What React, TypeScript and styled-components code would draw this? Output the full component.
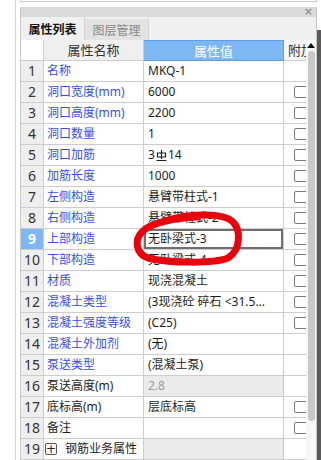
import styled, { createGlobalStyle } from 'styled-components'

type PropRow = {
  no: number
  name: string
  value: string
  link?: boolean
  check?: boolean
  muted?: boolean
  selected?: boolean
  rebar?: boolean
}

const rows: Array<PropRow> = [
  { no: 1, name: '名称', value: 'MKQ-1', link: true },
  { no: 2, name: '洞口宽度(mm)', value: '6000', link: true, check: true },
  { no: 3, name: '洞口高度(mm)', value: '2200', link: true, check: true },
  { no: 4, name: '洞口数量', value: '1', link: true, check: true },
  { no: 5, name: '洞口加筋', value: '14', link: true, check: true, rebar: true },
  { no: 6, name: '加筋长度', value: '1000', link: true, check: true },
  { no: 7, name: '左侧构造', value: '悬臂带柱式-1', link: true, check: true },
  { no: 8, name: '右侧构造', value: '悬臂带柱式-2', link: true, check: true },
  { no: 9, name: '上部构造', value: '无卧梁式-3', link: true, check: true, selected: true },
  { no: 10, name: '下部构造', value: '无卧梁式-4', link: true, check: true },
  { no: 11, name: '材质', value: '现浇混凝土', link: true, check: true },
  { no: 12, name: '混凝土类型', value: '(3现浇砼 碎石 <31.5...', link: true, check: true },
  { no: 13, name: '混凝土强度等级', value: '(C25)', link: true, check: true },
  { no: 14, name: '混凝土外加剂', value: '(无)', link: true },
  { no: 15, name: '泵送类型', value: '(混凝土泵)', link: true },
  { no: 16, name: '泵送高度(m)', value: '2.8', muted: true },
  { no: 17, name: '底标高(m)', value: '层底标高', check: true },
  { no: 18, name: '备注', value: '', check: true },
]

const GlobalStyle = createGlobalStyle`
  html, body {
    margin: 0;
    padding: 0;
    background: #fff;
  }
  body {
    font-family: "Noto Sans", "Noto Sans CJK SC", sans-serif;
    font-size: 12px;
    color: #1e1e1e;
  }
`

const Page = styled.div`
  position: relative;
  display: flex;
  width: 321px;
  height: 460px;
  overflow: hidden;
  padding-left: 15px;
  box-sizing: border-box;
`

const Frame = styled.div`
  border-left: 1px solid #d6d6d6;
  padding-left: 4px;
  display: flex;
  flex-direction: column;
`

const TopStub = styled.div`
  width: 297px;
  height: 3px;
  box-sizing: border-box;
  border: 1px solid #c8c8c8;
  border-top: none;
  margin-bottom: 5px;
`

const Panel = styled.div`
  width: 297px;
  flex: 1;
  box-sizing: border-box;
  border-left: 1px solid #c8c8c8;
  border-right: 1px solid #c8c8c8;
  display: flex;
  flex-direction: column;
`

const TitleBar = styled.div`
  height: 10px;
  background: #dadada;
  display: flex;
  justify-content: flex-end;
  align-items: center;
  padding-right: 3px;
  color: #808080;
  font-size: 11px;
  line-height: 10px;
  font-family: "DejaVu Sans", sans-serif;
`

const TabBar = styled.div`
  height: 23px;
  background: #f0f0f0;
  display: flex;
`

const Tab = styled.div<{ $active?: boolean }>`
  width: 64px;
  box-sizing: border-box;
  display: flex;
  align-items: center;
  justify-content: center;
  font-size: 12px;
  color: ${(p) => (p.$active ? '#151515' : '#8a8a8a')};
  background: ${(p) => (p.$active ? '#f0f0f0' : '#e2e2e2')};
  border-right: 1px solid #d4d4d4;
  margin-top: ${(p) => (p.$active ? '0' : '2px')};
  font-weight: ${(p) => (p.$active ? 700 : 400)};
`

const GridArea = styled.div`
  flex: 1;
  display: flex;
`

const Table = styled.div`
  width: 285px;
  overflow: hidden;
`

const Row = styled.div`
  display: grid;
  grid-template-columns: 23px 100px 140px 40px;
  height: 21px;
`

const Cell = styled.div`
  box-sizing: border-box;
  border-right: 1px solid #cdcdcd;
  border-bottom: 1px solid #cdcdcd;
  display: flex;
  align-items: center;
  line-height: 20px;
  white-space: nowrap;
  overflow: hidden;
`

const NumCell = styled(Cell)<{ $active?: boolean; $head?: boolean }>`
  justify-content: center;
  font-size: 14px;
  background: ${(p) => (p.$active ? '#7db8f4' : p.$head ? '#fff' : '#eeeeee')};
  color: ${(p) => (p.$active ? '#fff' : '#333')};
  font-weight: ${(p) => (p.$active ? 700 : 400)};
`

const HeadCell = styled(Cell)<{ $primary?: boolean }>`
  justify-content: center;
  font-size: 13px;
  background: ${(p) => (p.$primary ? '#7db8f4' : '#efefef')};
  color: ${(p) => (p.$primary ? '#fff' : '#333')};
  border: ${(p) => (p.$primary ? '1px solid #5c9fe6' : undefined)};
  border-left: none;
`

const AttachHead = styled(Cell)`
  background: #f6f6f6;
  color: #333;
  font-size: 13px;
  padding-left: 4px;
  border-right: none;
`

const NameCell = styled(Cell)<{ $link?: boolean }>`
  padding-left: 3px;
  color: ${(p) => (p.$link ? '#3a4fe2' : '#1e1e1e')};
`

const ValueCell = styled(Cell)<{ $muted?: boolean; $selected?: boolean }>`
  padding-left: 4px;
  background: ${(p) => (p.$muted ? '#ebebeb' : '#fff')};
  color: ${(p) => (p.$muted ? '#9a9a9a' : '#1e1e1e')};
  box-shadow: ${(p) => (p.$selected ? 'inset 0 0 0 2px #6f6f6f' : 'none')};
  text-overflow: ellipsis;
`

const AttachCell = styled(Cell)`
  padding-left: 10px;
  border-right: none;
`

const CheckBox = styled.span`
  width: 15px;
  height: 12px;
  box-sizing: border-box;
  border: 1px solid #7a7a7a;
  border-radius: 2px;
  background: #fff;
  flex: none;
`

const GroupName = styled(Cell)`
  padding-left: 1px;
  gap: 8px;
`

const PlusBox = styled.span`
  width: 12px;
  height: 12px;
  box-sizing: border-box;
  border: 1px solid #555;
  border-radius: 2px;
  display: flex;
  align-items: center;
  justify-content: center;
  font-size: 12px;
  line-height: 10px;
  font-family: "DejaVu Sans", sans-serif;
  color: #222;
`

const ScrollBar = styled.div`
  width: 10px;
  background: #f7f7f7;
  display: flex;
  flex-direction: column;
  align-items: center;
`

const ArrowUp = styled.span`
  margin-top: 3px;
  width: 0;
  height: 0;
  border-left: 4px solid transparent;
  border-right: 4px solid transparent;
  border-bottom: 5px solid #111;
`

const Thumb = styled.div`
  margin-top: 3px;
  width: 7px;
  height: 370px;
  border-radius: 4px;
  background: #c8c8c8;
`

const SideBar = styled.div`
  width: 4px;
  margin-top: 30px;
  background: #595959;
`

const Mark = styled.svg`
  position: absolute;
  left: 128px;
  top: 208px;
  pointer-events: none;
`

const RebarGlyph = () => (
  <svg width='11' height='13' viewBox='0 0 11 13' style={{ margin: '0 1px 0 1px' }}>
    <path d='M5.5 1 V10 M1.5 4 H9.5 V8 H1.5 Z M0.5 11.5 H10.5' stroke='#1e1e1e' strokeWidth='1.2' fill='none' />
  </svg>
)

const App = () => {
  return (
    <>
      <GlobalStyle />
      <Page>
        <Frame>
          <TopStub />
          <Panel>
            <TitleBar>×</TitleBar>
            <TabBar>
              <Tab $active>属性列表</Tab>
              <Tab>图层管理</Tab>
            </TabBar>
            <GridArea>
              <Table>
                <Row>
                  <NumCell $head />
                  <HeadCell>属性名称</HeadCell>
                  <HeadCell $primary>属性值</HeadCell>
                  <AttachHead>附加</AttachHead>
                </Row>
                {rows.map((r) => (
                  <Row key={r.no}>
                    <NumCell $active={r.selected}>{r.no}</NumCell>
                    <NameCell $link={r.link}>{r.name}</NameCell>
                    <ValueCell $muted={r.muted} $selected={r.selected}>
                      {r.rebar ? (
                        <>
                          3<RebarGlyph />
                          {r.value}
                        </>
                      ) : (
                        r.value
                      )}
                    </ValueCell>
                    <AttachCell>{r.check && <CheckBox />}</AttachCell>
                  </Row>
                ))}
                <Row>
                  <NumCell>19</NumCell>
                  <GroupName>
                    <PlusBox>+</PlusBox>
                    钢筋业务属性
                  </GroupName>
                  <ValueCell $muted />
                  <AttachCell />
                </Row>
              </Table>
              <ScrollBar>
                <ArrowUp />
                <Thumb />
              </ScrollBar>
            </GridArea>
          </Panel>
        </Frame>
        <SideBar />
        <Mark width='120' height='62' viewBox='0 0 120 62'>
          <path
            d='M40 12 C60 6, 95 4, 105 14 C113 22, 113 42, 100 50 C85 56, 40 55, 20 50 C8 46, 6 32, 14 24 C22 15, 45 10, 70 9'
            stroke='#e8000d'
            strokeWidth='7'
            strokeLinecap='round'
            fill='none'
          />
        </Mark>
      </Page>
    </>
  )
}

export default App
